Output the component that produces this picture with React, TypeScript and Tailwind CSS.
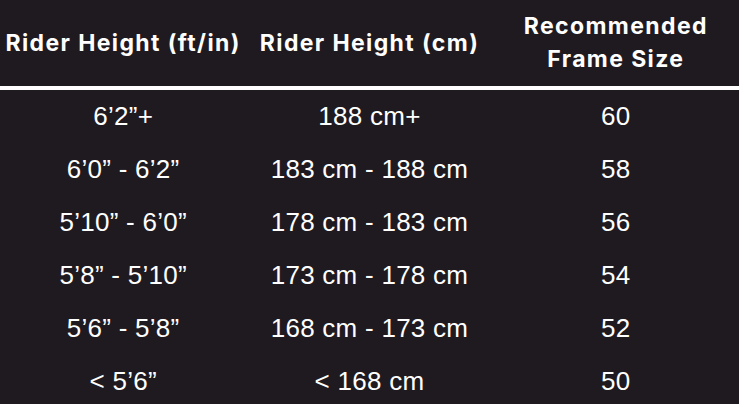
const rows = [
  ["6’2”+", "188 cm+", "60"],
  ["6’0” - 6’2”", "183 cm - 188 cm", "58"],
  ["5’10” - 6’0”", "178 cm - 183 cm", "56"],
  ["5’8” - 5’10”", "173 cm - 178 cm", "54"],
  ["5’6” - 5’8”", "168 cm - 173 cm", "52"],
  ["< 5’6”", "< 168 cm", "50"],
];

export default function App() {
  return (
    <div className="w-[739px] h-[404px] overflow-hidden bg-[#1e1a20] text-white">
      <div className="grid grid-cols-3 h-[86px] items-center text-center font-['Inter',sans-serif] font-bold text-[23px] tracking-[0.06em] leading-[33px]">
        <div className="whitespace-nowrap">Rider Height (ft/in)</div>
        <div className="whitespace-nowrap">Rider Height (cm)</div>
        <div>
          Recommended
          <br />
          Frame Size
        </div>
      </div>
      <div className="h-[4px] bg-white" />
      <div className="font-['Liberation_Sans',Arial,sans-serif] text-[26px] tracking-[0.01em]">
        {rows.map((row) => (
          <div key={row[0]} className="grid grid-cols-3 h-[53px] items-center text-center">
            {row.map((cell, i) => (
              <div key={i}>{cell}</div>
            ))}
          </div>
        ))}
      </div>
    </div>
  );
}
